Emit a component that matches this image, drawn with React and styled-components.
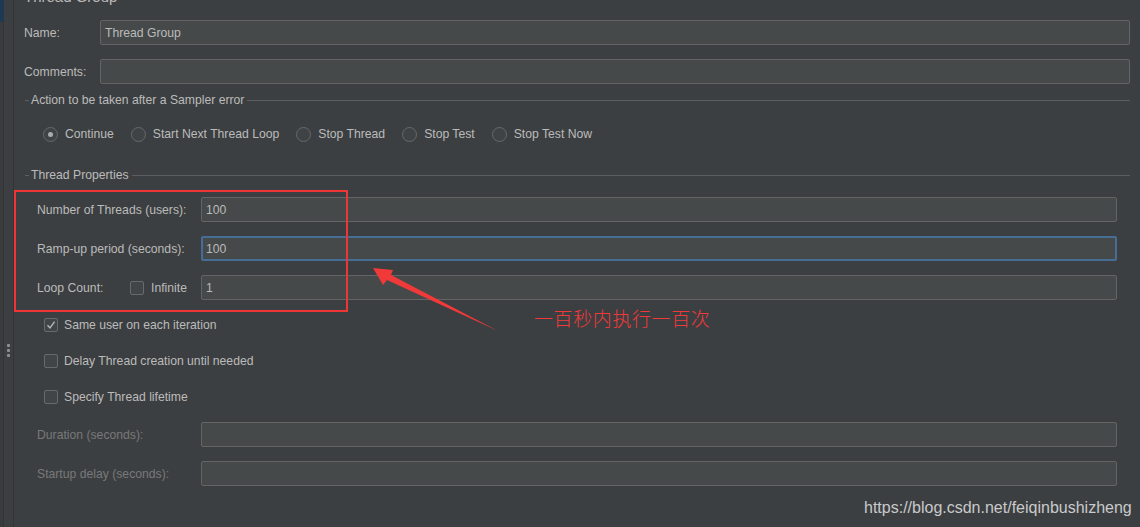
import styled, { createGlobalStyle } from 'styled-components';

const GlobalStyle = createGlobalStyle`
  html, body {
    margin: 0;
    padding: 0;
    background: #3c3f41;
    overflow: hidden;
  }
  * { box-sizing: border-box; }
`;

const Page = styled.div`
  position: relative;
  display: flex;
  width: 1140px;
  height: 527px;
  overflow: hidden;
  background: #3c3f41;
  font-family: 'Liberation Sans', Arial, sans-serif;
  font-size: 12.2px;
  color: #bbbbbb;
`;

const Rail = styled.div`
  position: relative;
  flex: 0 0 14px;
  display: flex;
  border-right: 1px solid #323436;
  .strip {
    width: 4px;
    background: #393b3d;
    border-right: 1px solid #333537;
    position: relative;
  }
  .strip::before {
    content: '';
    position: absolute;
    left: 0;
    top: 0;
    width: 4px;
    height: 22px;
    background: #1d3a52;
  }
`;

const Grip = styled.div`
  position: absolute;
  left: 7px;
  top: 344px;
  display: flex;
  flex-direction: column;
  gap: 2px;
  span {
    width: 3px;
    height: 3px;
    border-radius: 1px;
    background: #8d8f91;
  }
`;

const Main = styled.div`
  flex: 1;
  display: flex;
  flex-direction: column;
  padding: 0 10px 0 10px;
`;

const Title = styled.div`
  font-size: 15px;
  line-height: 16px;
  height: 16px;
  margin-top: -11px;
  margin-bottom: 15px;
  color: #bbbbbb;
`;

const Row = styled.div`
  display: flex;
  align-items: center;
  height: 25px;
  margin-bottom: ${p => p.$gap ?? 14}px;
`;

const Label = styled.div`
  flex: 0 0 ${p => p.$w}px;
  color: ${p => (p.$disabled ? '#78797a' : '#bbbbbb')};
  white-space: nowrap;
`;

const Field = styled.div`
  flex: 1;
  height: 25px;
  display: flex;
  align-items: center;
  padding-left: 4px;
  background: #45494a;
  border: ${p => (p.$focus ? '2px solid #466d94' : '1px solid #646464')};
  border-radius: 2px;
  color: #bbbbbb;
  ${p => p.$focus && 'padding-left: 3px;'}
`;

const Fieldset = styled.div`
  display: flex;
  flex-direction: column;
  margin-left: 1px;
`;

const Legend = styled.div`
  display: flex;
  align-items: center;
  height: 14px;
  &::before {
    content: '';
    width: 4px;
    height: 1px;
    background: #5b5d5f;
    margin-right: 2px;
  }
  &::after {
    content: '';
    flex: 1;
    height: 1px;
    background: #5b5d5f;
    margin-left: 3px;
  }
`;

const RadioRow = styled.div`
  display: flex;
  align-items: center;
  gap: 17px;
  padding-left: 18px;
  margin-top: 20px;
  margin-bottom: 27px;
  height: 14px;
`;

const RadioItem = styled.div`
  display: flex;
  align-items: center;
  gap: 7px;
`;

const Radio = styled.span`
  width: 15px;
  height: 15px;
  border-radius: 50%;
  border: 1px solid #67696b;
  background: #3f4345;
  display: flex;
  align-items: center;
  justify-content: center;
  &::after {
    content: '';
    width: 5px;
    height: 5px;
    border-radius: 50%;
    background: ${p => (p.$on ? '#a9abad' : 'transparent')};
  }
`;

const Props = styled.div`
  display: flex;
  flex-direction: column;
  padding: 0 13px 0 12px;
  margin-top: 15px;
`;

const LoopLabel = styled.div`
  flex: 0 0 164px;
  display: flex;
  align-items: center;
  white-space: nowrap;
  span.lc { width: 93px; }
  span.inf { margin-left: 7px; }
`;

const Box = styled.span`
  display: inline-flex;
  align-items: center;
  justify-content: center;
  width: 14px;
  height: 14px;
  border: 1px solid #676a6c;
  border-radius: 2px;
  background: #424547;
`;

const CheckRow = styled.div`
  display: flex;
  align-items: center;
  gap: 6px;
  height: 14px;
  padding-left: 7px;
  margin-bottom: 22px;
`;

const Lifetime = styled.div`
  display: flex;
  flex-direction: column;
  margin-top: -4px;
`;

const RedFrame = styled.div`
  position: absolute;
  left: 14px;
  top: 190px;
  width: 334px;
  height: 122px;
  border: 2px solid #ef3535;
`;

const Note = styled.div`
  position: absolute;
  left: 534px;
  top: 306px;
  font-family: 'Noto Sans CJK SC', sans-serif;
  font-size: 19px;
  font-weight: 300;
  line-height: 24px;
  letter-spacing: 0.6px;
  color: #f03a3a;
`;

const Arrow = styled.svg`
  position: absolute;
  left: 0;
  top: 0;
  pointer-events: none;
`;

const Watermark = styled.div`
  position: absolute;
  left: 864px;
  top: 498px;
  font-family: 'Liberation Sans', Arial, sans-serif;
  font-size: 16px;
  line-height: 20px;
  color: #c9cacb;
`;

const Check = () => (
  <svg width="10" height="10" viewBox="0 0 10 10">
    <path d="M1.5 5.2 L4 8 L8.6 1.6" fill="none" stroke="#b4b6b8" strokeWidth="1.4" />
  </svg>
);

const radios = ['Continue', 'Start Next Thread Loop', 'Stop Thread', 'Stop Test', 'Stop Test Now'];

export default function App() {
  return (
    <Page>
      <GlobalStyle />
      <Rail>
        <div className="strip" />
        <Grip><span /><span /><span /></Grip>
      </Rail>
      <Main>
        <Title>Thread Group</Title>
        <Row>
          <Label $w={76}>Name:</Label>
          <Field>Thread Group</Field>
        </Row>
        <Row $gap={9}>
          <Label $w={76}>Comments:</Label>
          <Field />
        </Row>

        <Fieldset>
          <Legend>Action to be taken after a Sampler error</Legend>
          <RadioRow>
            {radios.map((r, i) => (
              <RadioItem key={r}>
                <Radio $on={i === 0} />
                <span>{r}</span>
              </RadioItem>
            ))}
          </RadioRow>
        </Fieldset>

        <Fieldset>
          <Legend>Thread Properties</Legend>
          <Props>
            <Row>
              <Label $w={164}>Number of Threads (users):</Label>
              <Field>100</Field>
            </Row>
            <Row>
              <Label $w={164}>Ramp-up period (seconds):</Label>
              <Field $focus>100</Field>
            </Row>
            <Row $gap={18}>
              <LoopLabel>
                <span className="lc">Loop Count:</span>
                <Box />
                <span className="inf">Infinite</span>
              </LoopLabel>
              <Field>1</Field>
            </Row>
            <CheckRow>
              <Box><Check /></Box>
              <span>Same user on each iteration</span>
            </CheckRow>
            <CheckRow>
              <Box />
              <span>Delay Thread creation until needed</span>
            </CheckRow>
            <CheckRow>
              <Box />
              <span>Specify Thread lifetime</span>
            </CheckRow>
            <Lifetime>
              <Row>
                <Label $w={164} $disabled>Duration (seconds):</Label>
                <Field />
              </Row>
              <Row>
                <Label $w={164} $disabled>Startup delay (seconds):</Label>
                <Field />
              </Row>
            </Lifetime>
          </Props>
        </Fieldset>
      </Main>

      <RedFrame />
      <Arrow width="1140" height="527">
        <polygon points="373,268 393,270 391,275 498,331 387,280 383,285" fill="#f03a3a" />
      </Arrow>
      <Note>一百秒内执行一百次</Note>
      <Watermark>https://blog.csdn.net/feiqinbushizheng</Watermark>
    </Page>
  );
}
